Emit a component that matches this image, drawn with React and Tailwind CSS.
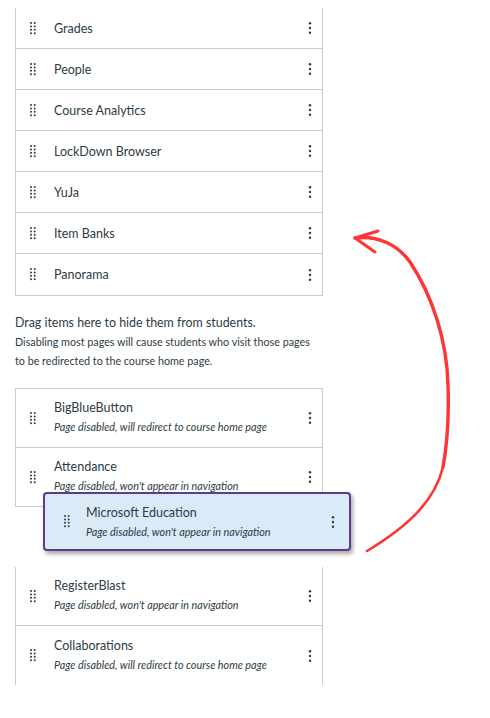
import React from "react";

const Grip = () => (
  <svg width="7" height="13" viewBox="0 0 7 13" className="block">
    {[1, 4.4, 7.8, 11.2].map((y) =>
      [1, 4.7].map((x) => <circle key={`${x}-${y}`} cx={x} cy={y} r="1" fill="#2d3b45" />)
    )}
  </svg>
);

const Kebab = () => (
  <svg width="4" height="12" viewBox="0 0 4 12" className="block">
    <circle cx="2" cy="1.3" r="1.2" fill="#2d3b45" />
    <circle cx="2" cy="6" r="1.2" fill="#2d3b45" />
    <circle cx="2" cy="10.7" r="1.2" fill="#2d3b45" />
  </svg>
);

const SimpleRow = ({ title, last, first }) => (
  <div
    className={`flex h-[41px] items-center pl-[14px] ${last ? "" : "border-b border-[#c7cdd1]"} ${first ? "-mt-[15px]" : ""}`}
  >
    <div className="w-[24px]">
      <Grip />
    </div>
    <div className="mt-[1px] flex-1 text-[12.5px] leading-[18px] text-[#2d3b45]">{title}</div>
    <div className="mr-[2px] flex w-[20px] justify-center">
      <Kebab />
    </div>
  </div>
);

const DisabledRow = ({ title, sub, border }) => (
  <div className={`flex h-[59px] items-center pl-[14px] ${border ? "border-b border-[#c7cdd1]" : ""}`}>
    <div className="w-[24px]">
      <Grip />
    </div>
    <div className="mb-[1px] flex-1">
      <div className="text-[12.5px] leading-[18px] text-[#2d3b45]">{title}</div>
      <div className="text-[10.8px] italic leading-[19px] text-[#2d3b45]">{sub}</div>
    </div>
    <div className="mr-[2px] flex w-[20px] justify-center">
      <Kebab />
    </div>
  </div>
);

export default function App() {
  return (
    <div
      className="relative h-[718px] w-[490px] overflow-hidden bg-white"
      style={{ fontFamily: "Lato, 'Open Sans', sans-serif" }}
    >
      <div className="pl-[15px]">
        <div className="mt-[23px] w-[308px] border-x border-b border-[#c7cdd1]">
          <SimpleRow title="Grades" first />
          <SimpleRow title="People" />
          <SimpleRow title="Course Analytics" />
          <SimpleRow title="LockDown Browser" />
          <SimpleRow title="YuJa" />
          <SimpleRow title="Item Banks" />
          <SimpleRow title="Panorama" last />
        </div>

        <div className="mt-[17px] text-[#2d3b45]">
          <div className="text-[12.4px] leading-[19px]">Drag items here to hide them from students.</div>
          <div className="text-[10.75px] leading-[19px]">
            Disabling most pages will cause students who visit those pages
            <br />
            to be redirected to the course home page.
          </div>
        </div>

        <div className="mt-[18px] w-[308px] border-x border-t border-[#c7cdd1]">
          <DisabledRow title="BigBlueButton" sub="Page disabled, will redirect to course home page" border />
          <DisabledRow title="Attendance" sub="Page disabled, won't appear in navigation" border />
        </div>
        <div className="h-[60px]" />
        <div className="w-[308px] border-x border-[#c7cdd1]">
          <DisabledRow title="RegisterBlast" sub="Page disabled, won't appear in navigation" border />
          <DisabledRow title="Collaborations" sub="Page disabled, will redirect to course home page" />
        </div>
      </div>

      <div className="absolute left-[43px] top-[492px] flex h-[59px] w-[308px] items-center rounded-[4px] border-2 border-[#5b3c8e] bg-[#dbeaf7] pl-[19px] shadow-[2px_3px_4px_rgba(0,0,0,0.35)]">
        <div className="w-[22px]">
          <Grip />
        </div>
        <div className="mt-[2px] flex-1">
          <div className="text-[12.5px] leading-[18px] text-[#2d3b45]">Microsoft Education</div>
          <div className="text-[10.8px] italic leading-[19px] text-[#2d3b45]">
            Page disabled, won't appear in navigation
          </div>
        </div>
        <div className="mr-[6px] flex w-[20px] justify-center">
          <Kebab />
        </div>
      </div>

      <svg className="pointer-events-none absolute left-0 top-0" width="490" height="718" viewBox="0 0 490 718">
        <path
          d="M355 238 C 378 235, 398 245, 410 262 C 432 295, 447 340, 448 385 C 449 415, 448 440, 443 467"
          fill="none"
          stroke="#ff3434"
          strokeWidth="3.4"
          strokeLinecap="round"
        />
        <path
          d="M443 467 C 435 500, 410 525, 367 551"
          fill="none"
          stroke="#ff3434"
          strokeWidth="2.6"
          strokeLinecap="round"
        />
        <path
          d="M378 231 L 355 238 L 375 252"
          fill="none"
          stroke="#ff3434"
          strokeWidth="3"
          strokeLinecap="round"
          strokeLinejoin="round"
        />
      </svg>
    </div>
  );
}
